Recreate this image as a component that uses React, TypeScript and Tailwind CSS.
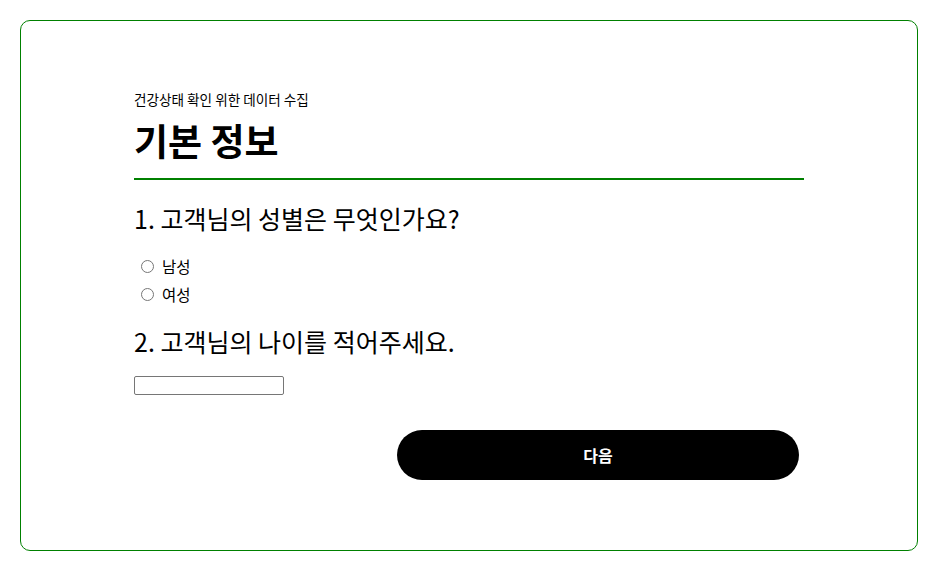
export default function App() {
  return (
    <div className="p-5 bg-white" style={{ fontFamily: '"Noto Sans CJK KR", "Noto Sans", sans-serif' }}>
      <div className="h-[531px] rounded-[10px] border border-[#008000] flex justify-center">
        <div className="w-[670px] pt-[69px] text-black">
          <p className="text-[13.6px] leading-[18px]">건강상태 확인 위한 데이터 수집</p>
          <h1 className="text-[37px] font-bold leading-[44px] mt-[10px]">기본 정보</h1>
          <div className="h-[2px] bg-[#008000] mt-[16px]" />
          <h2 className="text-[25px] leading-[32px] mt-[22px]">1. 고객님의 성별은 무엇인가요?</h2>
          <div className="mt-[22px] pl-[7px] flex flex-col gap-[8px]">
            <label className="flex items-center gap-[8px] text-[15.5px] leading-[20px]">
              <input type="radio" name="g" className="w-[13px] h-[13px] m-0" />
              남성
            </label>
            <label className="flex items-center gap-[8px] text-[15.5px] leading-[20px]">
              <input type="radio" name="g" className="w-[13px] h-[13px] m-0" />
              여성
            </label>
          </div>
          <h2 className="text-[25px] leading-[32px] mt-[21px]">2. 고객님의 나이를 적어주세요.</h2>
          <input type="text" className="block mt-[19px] w-[150px] h-[19px] border border-[#767676] rounded-[2px]" />
          <button className="block ml-auto mr-[5px] mt-[35px] w-[402px] h-[50px] rounded-full bg-black text-white text-[16px] font-bold">다음</button>
        </div>
      </div>
    </div>
  );
}
